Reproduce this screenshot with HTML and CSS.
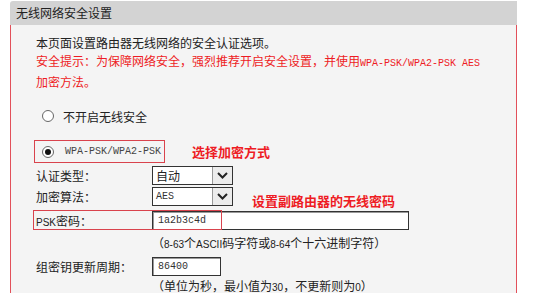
FILE: index.html
```html
<!DOCTYPE html>
<html>
<head>
<meta charset="utf-8">
<link rel="stylesheet" href="styles.css">
</head>
<body>
<div class="panel">
  <div class="header">无线网络安全设置</div>
  <div class="content">
    <div class="intro">
      <p>本页面设置路由器无线网络的安全认证选项。</p>
      <p class="red">安全提示：为保障网络安全，强烈推荐开启安全设置，并使用<span class="mono">WPA-PSK/WPA2-PSK AES</span></p>
      <p class="red">加密方法。</p>
    </div>
    <div class="radio-row">
      <span class="radio"></span>
      <span class="radio-label">不开启无线安全</span>
    </div>
    <div class="wpa-row">
      <div class="wpa-box">
        <span class="radio checked"></span>
        <span class="wpa-label mono">WPA-PSK/WPA2-PSK</span>
      </div>
      <span class="annot annot-wpa">选择加密方式</span>
    </div>
    <div class="form-row row-first">
      <span class="label">认证类型：</span>
      <div class="select">
        <span class="select-val">自动</span>
        <span class="select-btn"><svg width="11" height="7" viewBox="0 0 11 7"><path d="M1 1 L5.5 5.5 L10 1" fill="none" stroke="#222" stroke-width="2"/></svg></span>
      </div>
    </div>
    <div class="form-row">
      <span class="label">加密算法：</span>
      <div class="select">
        <span class="select-val mono small">AES</span>
        <span class="select-btn"><svg width="11" height="7" viewBox="0 0 11 7"><path d="M1 1 L5.5 5.5 L10 1" fill="none" stroke="#222" stroke-width="2"/></svg></span>
      </div>
      <span class="annot annot-psk">设置副路由器的无线密码</span>
    </div>
    <div class="form-row psk-row">
      <span class="label"><span class="lat">PSK</span>密码：</span>
      <div class="textbox wide"><span class="mono">1a2b3c4d</span></div>
      <span class="mark-box"></span>
    </div>
    <div class="hint">（<span class="lat">8-63</span>个<span class="lat">ASCII</span>码字符或<span class="lat">8-64</span>个十六进制字符）</div>
    <div class="form-row group-row">
      <span class="label">组密钥更新周期：</span>
      <div class="textbox short"><span class="mono">86400</span></div>
    </div>
    <div class="hint">（单位为秒，最小值为<span class="lat">30</span>，不更新则为<span class="lat">0</span>）</div>
  </div>
</div>
</body>
</html>
```

FILE: styles.css
```css
html, body {
  margin: 0;
  padding: 0;
  background: #ffffff;
}

body {
  font-family: "Noto Sans CJK SC", "Noto Sans", sans-serif;
  font-size: 12px;
  color: #222;
}

.panel {
  margin: 1px 0 0 10px;
  width: 507px;
}

.header {
  height: 24px;
  line-height: 24px;
  background: #d3d3d3;
  border-top-left-radius: 3px;
  padding-left: 6px;
  color: #222;
}

.content {
  box-sizing: border-box;
  height: 268px;
  background: #f4f4f4;
  border-left: 1px solid #e2505a;
  border-right: 1px solid #e2505a;
  padding: 9px 0 0 25px;
}

.intro p {
  margin: 0;
  line-height: 18px;
  white-space: nowrap;
}

.red {
  color: #ee1c24;
}

.mono {
  font-family: "Liberation Mono", "DejaVu Sans Mono", monospace;
  font-size: 10px;
}

.lat {
  font-family: "Liberation Sans", Arial, sans-serif;
  font-size: 10px;
}

.radio-row {
  margin-top: 15px;
  height: 20px;
  display: flex;
  align-items: center;
  padding-left: 6px;
}

.radio {
  box-sizing: border-box;
  width: 12px;
  height: 12px;
  border-radius: 50%;
  border: 1px solid #666;
  background: #fff;
  display: flex;
  align-items: center;
  justify-content: center;
  flex: none;
}

.radio.checked::after {
  content: "";
  width: 6px;
  height: 6px;
  border-radius: 50%;
  background: #111;
}

.radio-label {
  margin-left: 9px;
}

.wpa-row {
  margin-top: 14px;
  display: flex;
  align-items: center;
}

.wpa-box {
  box-sizing: border-box;
  margin-left: -2px;
  width: 131px;
  height: 23px;
  border: 1px solid #d9434d;
  padding-left: 7px;
  display: flex;
  align-items: center;
}

.wpa-label {
  margin-left: 11px;
  color: #444;
}

.annot {
  color: #ee1c24;
  font-weight: bold;
  font-size: 13px;
  white-space: nowrap;
}

.annot-wpa {
  margin-left: 27px;
}

.annot-psk {
  margin-left: 19px;
  padding-top: 7px;
}

.form-row {
  display: flex;
  align-items: center;
  height: 21px;
}

.row-first {
  margin-top: 2px;
}

.label {
  width: 116px;
  flex: none;
  white-space: nowrap;
}

.select {
  box-sizing: border-box;
  width: 81px;
  height: 19px;
  border: 1px solid #333;
  background: #fff;
  display: flex;
}

.select-val {
  flex: 1;
  padding-left: 3px;
  line-height: 17px;
}

.select-val.small {
  color: #333;
}

.select-btn {
  width: 19px;
  background: #ececec;
  border-left: 1px solid #999;
  display: flex;
  align-items: center;
  justify-content: center;
}

.psk-row {
  margin-top: 3px;
  height: 20px;
  position: relative;
}

.textbox {
  box-sizing: border-box;
  height: 19px;
  border: 1px solid #333;
  box-shadow: inset 1px 1px 0 #999;
  background: #fff;
  padding-left: 5px;
  display: flex;
  align-items: center;
  color: #333;
}

.textbox.wide {
  width: 257px;
}

.textbox.short {
  width: 69px;
}

.mark-box {
  position: absolute;
  left: -3px;
  top: 0;
  width: 189px;
  height: 20px;
  box-sizing: border-box;
  border: 1px solid #d9434d;
}

.hint {
  margin-top: 4px;
  height: 18px;
  line-height: 18px;
  padding-left: 116px;
  white-space: nowrap;
}

.group-row {
  margin-top: 3px;
  height: 22px;
}

.group-row + .hint {
  margin-top: 0;
}
```
